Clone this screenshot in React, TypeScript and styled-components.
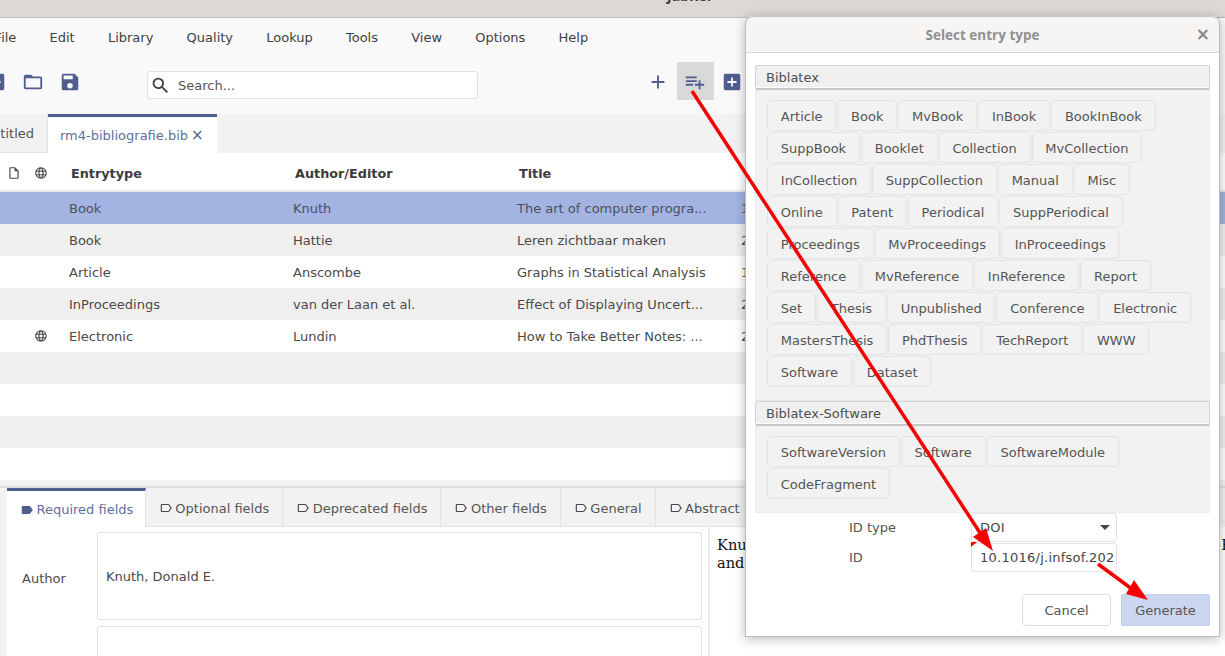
import styled, { createGlobalStyle } from "styled-components";

const Global = createGlobalStyle`
  html, body { margin: 0; padding: 0; background: #fff; overflow: hidden; }
  * { box-sizing: border-box; }
`;

const paths = {
  save: "M15,9H5V5H15M12,19A3,3 0 0,1 9,16A3,3 0 0,1 12,13A3,3 0 0,1 15,16A3,3 0 0,1 12,19M17,3H5C3.89,3 3,3.9 3,5V19A2,2 0 0,0 5,21H19A2,2 0 0,0 21,19V7L17,3Z",
  folder: "M20,18H4V8H20M20,6H12L10,4H4C2.89,4 2,4.89 2,6V18A2,2 0 0,0 4,20H20A2,2 0 0,0 22,18V8C22,6.89 21.1,6 20,6Z",
  plusBox: "M17,13H13V17H11V13H7V11H11V7H13V11H17M19,3H5C3.89,3 3,3.89 3,5V19A2,2 0 0,0 5,21H19A2,2 0 0,0 21,19V5C21,3.89 20.1,3 19,3Z",
  plus: "M19,13H13V19H11V13H5V11H11V5H13V11H19V13Z",
  playlist: "M2,16H10V14H2M18,14V10H16V14H12V16H16V20H18V16H22V14M14,6H2V8H14M14,10H2V12H14V10Z",
  search: "M9.5,3A6.5,6.5 0 0,1 16,9.5C16,11.11 15.41,12.59 14.44,13.73L14.71,14H15.5L20.5,19L19,20.5L14,15.5V14.71L13.73,14.44C12.59,15.41 11.11,16 9.5,16A6.5,6.5 0 0,1 3,9.5A6.5,6.5 0 0,1 9.5,3M9.5,5C7,5 5,7 5,9.5C5,12 7,14 9.5,14C12,14 14,12 14,9.5C14,7 12,5 9.5,5Z",
  label: "M17.63,5.84C17.27,5.33 16.67,5 16,5H5A2,2 0 0,0 3,7V17A2,2 0 0,0 5,19H16C16.67,19 17.27,18.66 17.63,18.15L22,12L17.63,5.84Z",
  labelOutline: "M16,17H5V7H16L19.55,12M17.63,5.84C17.27,5.33 16.67,5 16,5H5A2,2 0 0,0 3,7V17A2,2 0 0,0 5,19H16C16.67,19 17.27,18.66 17.63,18.15L22,12L17.63,5.84Z",
  file: "M14,2H6A2,2 0 0,0 4,4V20A2,2 0 0,0 6,22H18A2,2 0 0,0 20,20V8L14,2M18,20H6V4H13V9H18V20Z",
  web: "M16.36,14C16.44,13.34 16.5,12.68 16.5,12C16.5,11.32 16.44,10.66 16.36,10H19.74C19.9,10.64 20,11.31 20,12C20,12.69 19.9,13.36 19.74,14M14.59,19.56C15.19,18.45 15.65,17.25 15.97,16H18.92C17.96,17.65 16.43,18.93 14.59,19.56M14.34,14H9.66C9.56,13.34 9.5,12.68 9.5,12C9.5,11.32 9.56,10.65 9.66,10H14.34C14.43,10.65 14.5,11.32 14.5,12C14.5,12.68 14.43,13.34 14.34,14M12,19.96C11.17,18.76 10.5,17.43 10.09,16H13.91C13.5,17.43 12.83,18.76 12,19.96M8,8H5.08C6.03,6.34 7.57,5.06 9.4,4.44C8.8,5.55 8.35,6.75 8,8M5.08,16H8C8.35,17.25 8.8,18.45 9.4,19.56C7.57,18.93 6.03,17.65 5.08,16M4.26,14C4.1,13.36 4,12.69 4,12C4,11.31 4.1,10.64 4.26,10H7.64C7.56,10.66 7.5,11.32 7.5,12C7.5,12.68 7.56,13.34 7.64,14M12,4.03C12.83,5.23 13.5,6.57 13.91,8H10.09C10.5,6.57 11.17,5.23 12,4.03M18.92,8H15.97C15.65,6.75 15.19,5.55 14.59,4.44C16.43,5.07 17.96,6.34 18.92,8M12,2C6.47,2 2,6.5 2,12A10,10 0 0,0 12,22A10,10 0 0,0 22,12A10,10 0 0,0 12,2Z",
};

function Icon({ d, size, color }: { d: string; size: number; color: string }) {
  return (
    <svg width={size} height={size} viewBox="0 0 24 24" fill={color} style={{ flex: "none" }}>
      <path d={d} />
    </svg>
  );
}

const BLUE = "#4f5d8f";
const GREY = "#4a4a4a";

const menus = ["File", "Edit", "Library", "Quality", "Lookup", "Tools", "View", "Options", "Help"];

const rows = [
  { type: "Book", author: "Knuth", title: "The art of computer progra...", year: "1", tail: "H", selected: true },
  { type: "Book", author: "Hattie", title: "Leren zichtbaar maken", year: "2", tail: "e" },
  { type: "Article", author: "Anscombe", title: "Graphs in Statistical Analysis", year: "1", tail: "C" },
  { type: "InProceedings", author: "van der Laan et al.", title: "Effect of Displaying Uncert...", year: "2", tail: "e" },
  { type: "Electronic", author: "Lundin", title: "How to Take Better Notes: ...", year: "2", tail: "i", web: true },
  { type: "", author: "", title: "", year: "", tail: "" },
  { type: "", author: "", title: "", year: "", tail: "" },
  { type: "", author: "", title: "", year: "", tail: "" },
  { type: "", author: "", title: "", year: "", tail: "" },
];

const fieldTabs = ["Optional fields", "Deprecated fields", "Other fields", "General", "Abstract", "Comments", "Owner", "Citation"];

const biblatex = [
  "Article", "Book", "MvBook", "InBook", "BookInBook", "SuppBook", "Booklet", "Collection", "MvCollection",
  "InCollection", "SuppCollection", "Manual", "Misc", "Online", "Patent", "Periodical", "SuppPeriodical",
  "Proceedings", "MvProceedings", "InProceedings", "Reference", "MvReference", "InReference", "Report",
  "Set", "Thesis", "Unpublished", "Conference", "Electronic", "MastersThesis", "PhdThesis", "TechReport",
  "WWW", "Software", "Dataset",
];
const software = ["SoftwareVersion", "Software", "SoftwareModule", "CodeFragment"];

export default function App() {
  return (
    <Page>
      <Global />
      <TitleBar>JabRef</TitleBar>
      <MenuBar>
        {menus.map((m) => (
          <MenuItem key={m}>{m}</MenuItem>
        ))}
      </MenuBar>
      <ToolBar>
        <ToolButton><Icon d={paths.plusBox} size={22} color={BLUE} /></ToolButton>
        <ToolButton><Icon d={paths.folder} size={22} color={BLUE} /></ToolButton>
        <ToolButton><Icon d={paths.save} size={22} color={BLUE} /></ToolButton>
        <SearchBox>
          <Icon d={paths.search} size={21} color="#3c3c3c" />
          <SearchText>Search...</SearchText>
        </SearchBox>
        <EntryTools>
          <ToolButton><Icon d={paths.plus} size={22} color={BLUE} /></ToolButton>
          <ToolButton $hover><Icon d={paths.playlist} size={22} color={BLUE} /></ToolButton>
          <ToolButton><Icon d={paths.plusBox} size={22} color={BLUE} /></ToolButton>
        </EntryTools>
      </ToolBar>
      <LibraryTabs>
        <LibraryTab>titled</LibraryTab>
        <ActiveLibraryTab>
          rm4-bibliografie.bib
          <TabClose>×</TabClose>
        </ActiveLibraryTab>
      </LibraryTabs>
      <TableHeader>
        <IconCell><Icon d={paths.file} size={14} color={GREY} /></IconCell>
        <IconCell><Icon d={paths.web} size={14} color={GREY} /></IconCell>
        <HeaderCell>Entrytype</HeaderCell>
        <HeaderCell>Author/Editor</HeaderCell>
        <HeaderCell>Title</HeaderCell>
        <HeaderCell />
        <HeaderCell />
        <HeaderCell>e</HeaderCell>
      </TableHeader>
      <TableBody>
        {rows.map((r, i) => (
          <Row key={i} $selected={r.selected} $odd={i % 2 === 1}>
            <IconCell />
            <IconCell>{r.web && <Icon d={paths.web} size={14} color={GREY} />}</IconCell>
            <Cell>{r.type}</Cell>
            <Cell>{r.author}</Cell>
            <Cell>{r.title}</Cell>
            <Cell>{r.year}</Cell>
            <Cell />
            <Cell>{r.tail}</Cell>
          </Row>
        ))}
      </TableBody>
      <Bottom>
        <FieldTabs>
          <ActiveFieldTab>
            <Icon d={paths.label} size={14} color={BLUE} />
            Required fields
          </ActiveFieldTab>
          {fieldTabs.map((t) => (
            <FieldTab key={t}>
              <Icon d={paths.labelOutline} size={14} color={GREY} />
              {t}
            </FieldTab>
          ))}
        </FieldTabs>
        <Editor>
          <Fields>
            <FieldRow>
              <FieldLabel>Author</FieldLabel>
              <FieldBox>Knuth, Donald E.</FieldBox>
            </FieldRow>
            <FieldRow>
              <FieldLabel />
              <FieldBox />
            </FieldRow>
          </Fields>
          <Preview>
            Knuth, Donald E. 1997. The Art of Computer Programming. 3rd ed. Reading, Mass
            <br />
            and
          </Preview>
        </Editor>
      </Bottom>

      <Dialog>
        <DialogTitle>
          Select entry type
          <DialogClose>×</DialogClose>
        </DialogTitle>
        <DialogBody>
          <SectionHeader>Biblatex</SectionHeader>
          <SectionContent>
            {biblatex.map((b) => (
              <TypeButton key={b}>{b}</TypeButton>
            ))}
          </SectionContent>
          <SectionHeader>Biblatex-Software</SectionHeader>
          <SectionContent>
            {software.map((b) => (
              <TypeButton key={b}>{b}</TypeButton>
            ))}
          </SectionContent>
          <IdGrid>
            <IdLabel>ID type</IdLabel>
            <IdField>
              DOI
              <SelectArrow />
            </IdField>
            <IdLabel>ID</IdLabel>
            <IdField>10.1016/j.infsof.202</IdField>
          </IdGrid>
          <DialogButtons>
            <CancelButton>Cancel</CancelButton>
            <GenerateButton>Generate</GenerateButton>
          </DialogButtons>
        </DialogBody>
      </Dialog>

      <Arrows width="1225" height="656" viewBox="0 0 1225 656">
        <line x1="692" y1="91" x2="986" y2="542" stroke="#f50000" strokeWidth="3.5" />
        <polygon points="993,551 973,537 986,528" fill="#f50000" />
        <polygon points="971,547 977,542 971,542" fill="#f50000" />
        <line x1="1098" y1="564" x2="1136" y2="592" stroke="#f50000" strokeWidth="3.5" />
        <polygon points="1148,600 1126,594 1134,580" fill="#f50000" />
      </Arrows>
    </Page>
  );
}

const Page = styled.div`
  position: relative;
  width: 1225px;
  height: 656px;
  overflow: hidden;
  display: flex;
  flex-direction: column;
  background: #fff;
  font-family: "DejaVu Sans", sans-serif;
  font-size: 13px;
  color: ${GREY};
`;

const TitleBar = styled.div`
  height: 18px;
  flex: none;
  display: flex;
  align-items: flex-end;
  justify-content: center;
  padding: 0 0 12px 154px;
  background: #dcd9d5;
  border-bottom: 1px solid #bfbbb6;
  font-family: "Open Sans", sans-serif;
  font-weight: 700;
  font-size: 14px;
  line-height: 18px;
  color: #3d3d3d;
  overflow: hidden;
`;

const MenuBar = styled.div`
  height: 38px;
  flex: none;
  display: flex;
  align-items: center;
  margin-left: -22px;
  background: #f9f9f9;
`;

const MenuItem = styled.div`
  padding: 0 16.6px;
  color: #3f3f3f;
`;

const ToolBar = styled.div`
  height: 58px;
  flex: none;
  display: flex;
  align-items: flex-start;
  padding: 6px 0 0;
  margin-left: -23px;
  background: #f9f9f9;
`;

const ToolButton = styled.div<{ $hover?: boolean }>`
  width: 37px;
  height: 38px;
  flex: none;
  display: flex;
  align-items: center;
  justify-content: center;
  padding-top: 2px;
  background: ${(p) => (p.$hover ? "#d9d9d9" : "transparent")};
`;

const EntryTools = styled.div`
  display: flex;

  ${ToolButton} {
    padding-right: 1px;
  }
`;

const SearchBox = styled.div`
  width: 331px;
  height: 28px;
  flex: none;
  margin: 9px 162px 0 59px;
  padding-left: 2px;
  display: flex;
  align-items: center;
  gap: 7px;
  background: #fff;
  border: 1px solid #e2e2e2;
  border-radius: 3px;
`;

const SearchText = styled.span`
  color: #555;
`;

const LibraryTabs = styled.div`
  height: 39px;
  flex: none;
  display: flex;
  background: #f2f2f2;
`;

const LibraryTab = styled.div`
  width: 48px;
  display: flex;
  align-items: center;
  justify-content: flex-end;
  padding: 0 13px 0 0;
  border-right: 1px solid #e4e4e4;
  border-bottom: 1px solid #e4e4e4;
  background: #f2f2f2;
  color: #555;
`;

const ActiveLibraryTab = styled.div`
  width: 169px;
  display: flex;
  align-items: center;
  padding-left: 12px;
  background: #fff;
  border-top: 3px solid ${BLUE};
  color: #5f6f9f;
`;

const TabClose = styled.span`
  margin-left: 3px;
  font-size: 15px;
  color: ${BLUE};
`;

const columns = "27px 28px 224px 224px 224px 224px 24px 60px";

const TableHeader = styled.div`
  height: 39px;
  flex: none;
  display: grid;
  grid-template-columns: ${columns};
  align-items: center;
  padding-top: 3px;
  background: #fff;
  border-bottom: 2px solid #e9e9e9;
`;

const IconCell = styled.div`
  display: flex;
  align-items: center;
  justify-content: center;
`;

const HeaderCell = styled.div`
  padding-left: 16px;
  font-weight: 700;
  font-size: 12.8px;
  color: #3c3c3c;
`;

const TableBody = styled.div`
  flex: none;
  height: 296px;
  overflow: hidden;
  background: #f2f2f2;
  border-bottom: 2px solid #dedede;
`;

const Row = styled.div<{ $selected?: boolean; $odd?: boolean }>`
  height: 32px;
  display: grid;
  grid-template-columns: ${columns};
  align-items: center;
  background: ${(p) => (p.$selected ? "#a3b4e2" : p.$odd ? "#efefef" : "#fff")};
  color: ${(p) => (p.$selected ? "#4d5060" : GREY)};
`;

const Cell = styled.div`
  padding-left: 14px;
  white-space: nowrap;
  overflow: hidden;
`;

const Bottom = styled.div`
  flex: 1;
  min-height: 0;
  display: flex;
  flex-direction: column;
  padding-left: 7px;
  background: #f2f2f2;
`;

const FieldTabs = styled.div`
  height: 39px;
  flex: none;
  display: flex;
  overflow: hidden;
`;

const FieldTab = styled.div`
  flex: none;
  display: flex;
  align-items: center;
  gap: 2.5px;
  padding: 2px 13px 0;
  background: #f2f2f2;
  border-right: 1px solid #e2e2e2;
  border-bottom: 1px solid #e2e2e2;
  color: #555;
`;

const ActiveFieldTab = styled(FieldTab)`
  padding: 1px 11.5px 0 13px;
  background: #fff;
  border-top: 3px solid ${BLUE};
  border-bottom: none;
  color: #5f6f9f;
`;

const Editor = styled.div`
  flex: 1;
  min-height: 0;
  display: flex;
  background: #fff;
  overflow: hidden;
`;

const Fields = styled.div`
  width: 701px;
  flex: none;
  display: flex;
  flex-direction: column;
  gap: 6px;
  padding: 5px 0 0 15px;
`;

const FieldRow = styled.div`
  display: flex;
  align-items: center;
  flex: none;
`;

const FieldLabel = styled.div`
  width: 75px;
  flex: none;
  padding-top: 4px;
`;

const FieldBox = styled.div`
  width: 605px;
  height: 88px;
  flex: none;
  display: flex;
  align-items: center;
  padding: 0 8px;
  background: #fff;
  border: 1px solid #e0e0e0;
  border-radius: 3px;
`;

const Preview = styled.div`
  flex: 1;
  padding: 9px 0 0 7px;
  border-left: 2px solid #ececec;
  font-family: "DejaVu Serif", serif;
  font-size: 14.6px;
  line-height: 18px;
  color: #111;
  white-space: nowrap;
`;

const Dialog = styled.div`
  position: absolute;
  left: 745px;
  top: 16px;
  width: 475px;
  height: 621px;
  display: flex;
  flex-direction: column;
  background: #fff;
  border: 1px solid #bdbdbd;
  border-top: none;
  border-radius: 8px 8px 0 0;
  box-shadow: 0 2px 12px rgba(0, 0, 0, 0.28);
`;

const DialogTitle = styled.div`
  position: relative;
  height: 37px;
  flex: none;
  display: flex;
  align-items: center;
  justify-content: center;
  background: #f6f5f4;
  border-top: 1px solid #c9c7c4;
  border-bottom: 1px solid #d6d3d0;
  border-radius: 8px 8px 0 0;
  font-family: "Open Sans", sans-serif;
  font-weight: 700;
  font-size: 13.5px;
  color: #8f8f8f;
`;

const DialogClose = styled.span`
  position: absolute;
  right: 9px;
  top: 7px;
  font-family: "DejaVu Sans", sans-serif;
  font-size: 17px;
  line-height: 20px;
  color: #888;
`;

const DialogBody = styled.div`
  flex: 1;
  display: flex;
  flex-direction: column;
  padding: 12px 9px 0;
`;

const SectionHeader = styled.div`
  height: 25px;
  flex: none;
  display: flex;
  align-items: center;
  padding-left: 10px;
  background: #f0f0f0;
  border: 1px solid #d4d4d4;
  border-bottom: 2px solid #c8c8c8;
  border-radius: 2px;
  box-shadow: inset 0 -1px 0 #fff;
  color: #4d4d4d;
`;

const SectionContent = styled.div`
  flex: none;
  display: flex;
  flex-wrap: wrap;
  align-content: flex-start;
  gap: 1px;
  padding: 10px 14px 13px 11px;
  background: #f2f2f2;
  border: 1px solid #ebebeb;
  border-top: none;
`;

const TypeButton = styled.div`
  height: 31px;
  flex: none;
  display: flex;
  align-items: center;
  padding: 1px 12.8px 0;
  background: #f2f2f2;
  border: 1px solid #e3e3e3;
  border-radius: 4px;
  color: #555;
`;

const IdGrid = styled.div`
  flex: none;
  display: grid;
  grid-template-columns: 122px 146px;
  grid-auto-rows: 29px;
  row-gap: 1px;
  align-items: center;
  padding-left: 94px;
`;

const IdLabel = styled.div`
  color: #555;
`;

const IdField = styled.div`
  position: relative;
  height: 29px;
  display: flex;
  align-items: center;
  padding-left: 8px;
  background: #fff;
  border: 1px solid #e0e0e0;
  border-radius: 3px;
  white-space: nowrap;
  overflow: hidden;
  letter-spacing: 0.25px;
  color: #444;
`;

const SelectArrow = styled.span`
  position: absolute;
  right: 6px;
  top: 11px;
  border-left: 5px solid transparent;
  border-right: 5px solid transparent;
  border-top: 5px solid #444;
`;

const DialogButtons = styled.div`
  flex: none;
  display: flex;
  justify-content: flex-end;
  gap: 10px;
  margin-top: 22px;
`;

const CancelButton = styled.div`
  width: 89px;
  height: 32px;
  display: flex;
  align-items: center;
  justify-content: center;
  background: #fff;
  border: 1px solid #dcdcdc;
  border-radius: 4px;
  color: #555;
`;

const GenerateButton = styled(CancelButton)`
  background: #cbd6f0;
  border-color: #c2cee9;
  border-radius: 2px;
`;

const Arrows = styled.svg`
  position: absolute;
  left: 0;
  top: 0;
  pointer-events: none;
`;
